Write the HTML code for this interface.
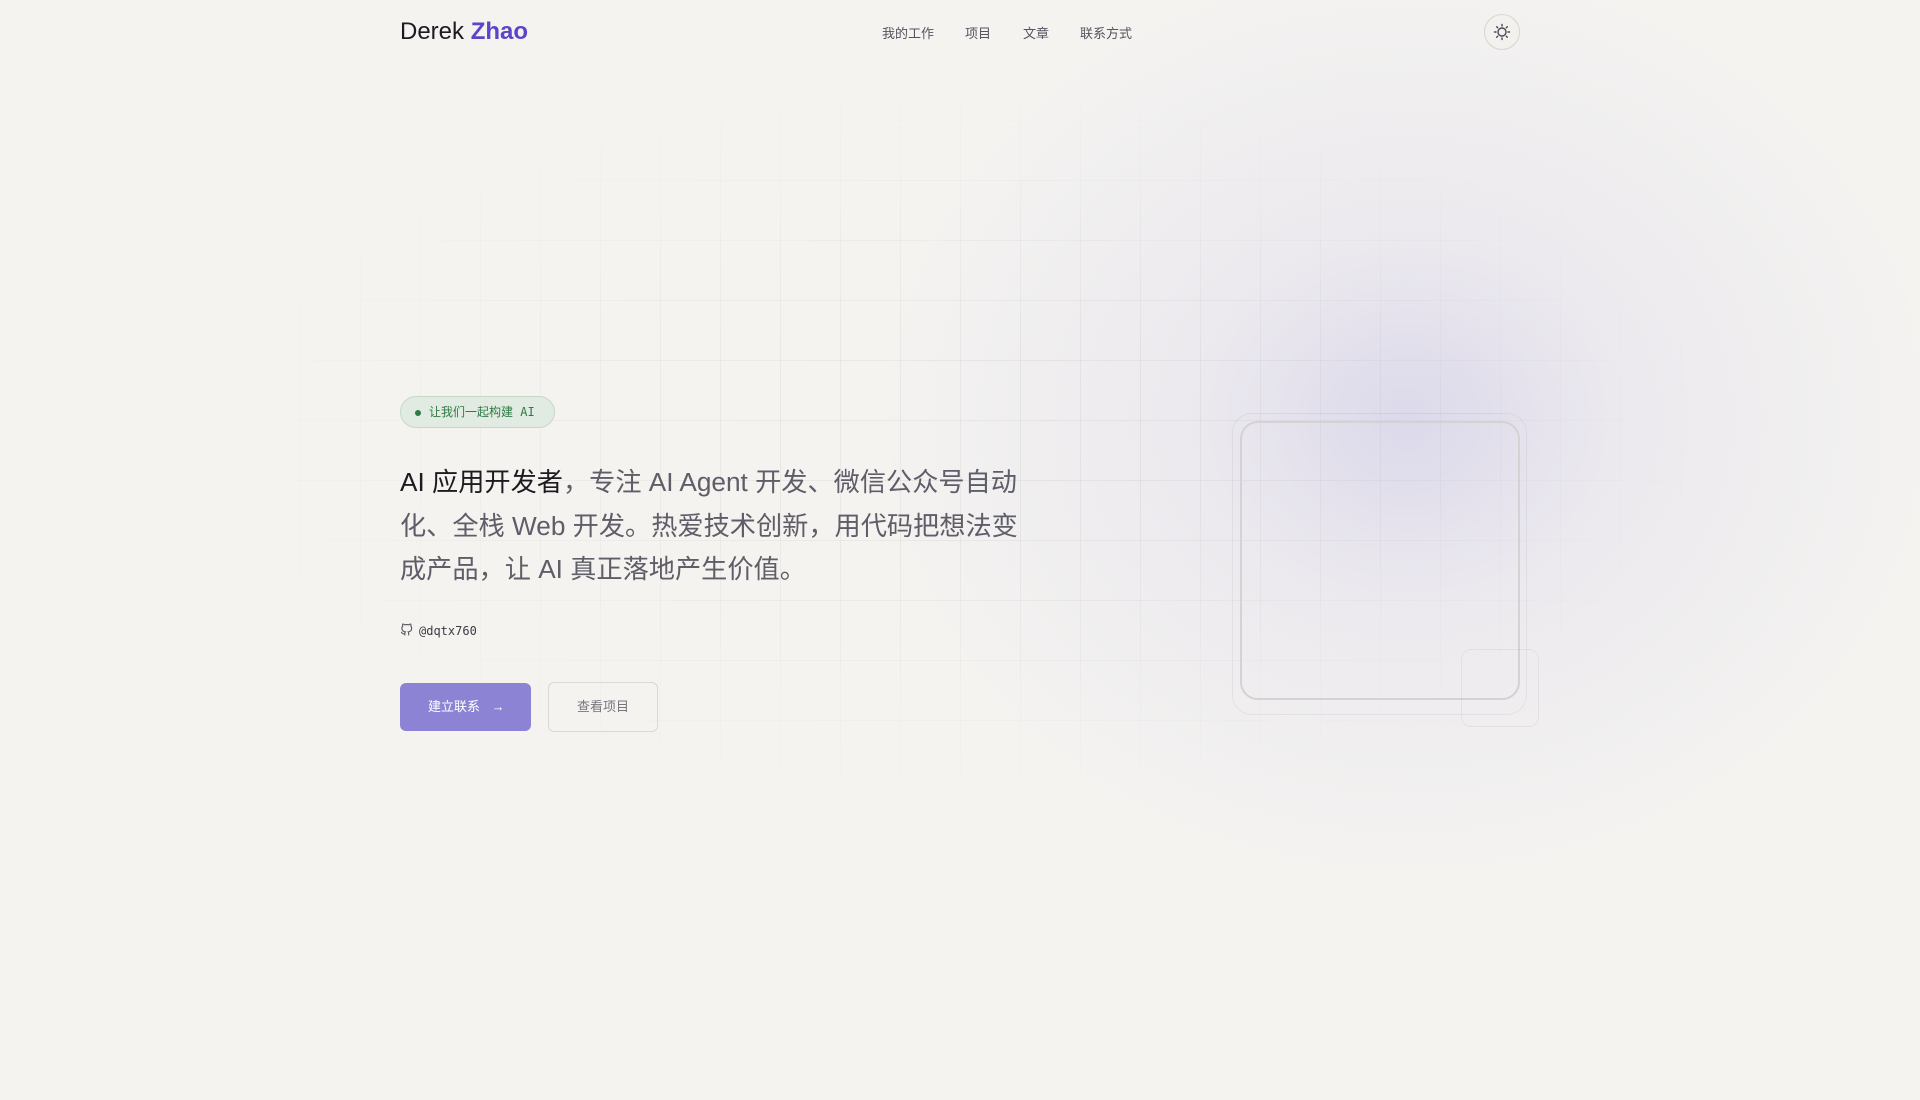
<!DOCTYPE html>
<html><head><meta charset="utf-8"><style>
*{margin:0;padding:0;box-sizing:border-box}
body{width:1920px;height:1080px;background:#f4f3f0;position:relative;overflow:hidden;font-family:"Liberation Sans","Noto Sans CJK SC",sans-serif}
.glow{position:absolute;left:780px;top:-150px;width:1260px;height:1250px;background:radial-gradient(ellipse 530px 460px at 628px 570px,rgba(200,195,230,.55) 0%,rgba(220,215,235,.35) 40%,rgba(244,243,240,0) 100%)}
.grid{position:absolute;left:0;top:0;width:1920px;height:1080px;background-image:linear-gradient(to right,rgba(0,0,0,.045) 1px,transparent 1px),linear-gradient(to bottom,rgba(0,0,0,.045) 1px,transparent 1px);background-size:60px 60px;-webkit-mask-image:radial-gradient(ellipse 800px 380px at 960px 440px,#000 25%,transparent 100%);mask-image:radial-gradient(ellipse 800px 380px at 960px 440px,#000 25%,transparent 100%)}
.logo{position:absolute;left:400px;top:18px;font-size:24px;color:#1c1b22}
.logo b{color:#5b46c9}
.nav{position:absolute;top:23px;font-size:13px;color:#55535e}
.theme{position:absolute;left:1484px;top:14px;width:36px;height:36px;border-radius:50%;border:1px solid #d8d5cc;background:#f2f1ee}
.badge{position:absolute;left:400px;top:396px;width:155px;height:32px;border-radius:16px;background:#e1ebe2;border:1px solid #c5d8c8;font-family:"DejaVu Sans Mono","Noto Sans CJK SC",monospace;font-size:12px;color:#2e7a45;line-height:30px;padding-left:28px}
.badge:before{content:"";position:absolute;left:14px;top:13px;width:6px;height:6px;border-radius:50%;background:#2e7a45}
.h{position:absolute;left:400px;top:461px;font-size:26.2px;line-height:43.5px;color:#5f5d68;white-space:nowrap}
.h span{color:#1c1b22}
.gh{position:absolute;left:400px;top:623px;font-family:"DejaVu Sans Mono",monospace;font-size:12px;color:#3c3a44}
.b1{position:absolute;left:400px;top:683px;width:131px;height:48px;border-radius:6px;background:#8d83d4;color:#fff;font-size:13px;line-height:48px;padding-left:28px}
.b2{position:absolute;left:548px;top:682px;width:110px;height:50px;border-radius:6px;border:1px solid #dcd9d3;color:#77757e;font-size:13px;line-height:48px;text-align:center}
.box{position:absolute;left:1240px;top:421px;width:280px;height:279px;border:2px solid #d4d2d2;border-radius:18px}
.box2{position:absolute;left:1232px;top:413px;width:295px;height:302px;border:1px solid rgba(0,0,0,.05);border-radius:20px}
.box3{position:absolute;left:1461px;top:649px;width:78px;height:78px;border:1px solid rgba(0,0,0,.05);border-radius:10px}
</style></head><body>
<div class="glow"></div><div class="grid"></div>
<div class="logo">Derek <b>Zhao</b></div>
<div class="nav" style="left:882px">我的工作</div>
<div class="nav" style="left:965px">项目</div>
<div class="nav" style="left:1023px">文章</div>
<div class="nav" style="left:1080px">联系方式</div>
<div class="theme"><svg width="34" height="34" viewBox="0 0 34 34" fill="none" stroke="#4a4852" stroke-width="1.4" stroke-linecap="round"><circle cx="17" cy="17" r="4"/><path d="M17 9.5v1.5M17 23v1.5M9.5 17h1.5M23 17h1.5M11.7 11.7l1 1M21.3 21.3l1 1M11.7 22.3l1-1M21.3 12.7l1-1"/></svg></div>
<div class="badge">让我们一起构建 AI</div>
<div class="h"><span>AI 应用开发者</span>，专注 AI Agent 开发、微信公众号自动<br>化、全栈 Web 开发。热爱技术创新，用代码把想法变<br>成产品，让 AI 真正落地产生价值。</div>
<div class="gh"><svg width="13" height="14" viewBox="0 0 24 24" fill="none" stroke="#55535e" stroke-width="2" style="vertical-align:-2px;margin-right:6px"><path d="M9 19c-5 1.5-5-2.5-7-3m14 6v-3.9a3.4 3.4 0 0 0-.9-2.6c3.1-.3 6.4-1.5 6.4-7A5.4 5.4 0 0 0 20 4.8 5 5 0 0 0 19.9 1S18.7.7 16 2.5a13.4 13.4 0 0 0-7 0C6.3.7 5.1 1 5.1 1A5 5 0 0 0 5 4.8a5.4 5.4 0 0 0-1.5 3.7c0 5.4 3.3 6.6 6.4 7A3.4 3.4 0 0 0 9 18.1V22"/></svg>@dqtx760</div>
<div class="b1">建立联系 <span style="margin-left:8px">→</span></div>
<div class="b2">查看项目</div>
<div class="box2"></div><div class="box"></div><div class="box3"></div>
</body></html>
